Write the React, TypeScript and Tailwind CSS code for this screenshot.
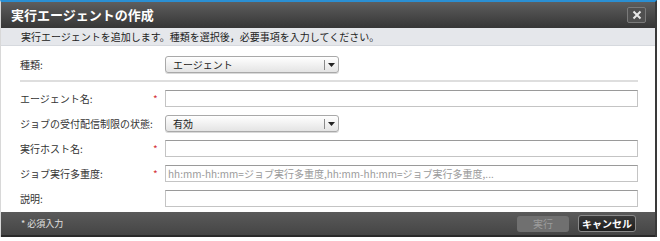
import React from "react";

const font = { fontFamily: '"Noto Sans CJK JP", "Liberation Sans", sans-serif' };

function Select({ value }: { value: string }) {
  return (
    <div className="flex h-[17px] w-[174px] items-center rounded-[3px] border border-[#a9a9a9] bg-gradient-to-b from-[#ffffff] to-[#e4e4e4] shadow-[0_1px_0_rgba(0,0,0,0.15)]">
      <span className="flex-1 pl-[7px] text-[10px] leading-none text-[#222]">{value}</span>
      <span className="h-[10px] w-px bg-[#8a8a8a]" />
      <span className="flex w-[13px] items-center justify-center">
        <svg width="7" height="4" viewBox="0 0 7 4">
          <path d="M0 0h7L3.5 4z" fill="#222" />
        </svg>
      </span>
    </div>
  );
}

function Input({ placeholder }: { placeholder?: string }) {
  return (
    <div className="flex h-[17px] flex-1 items-center border border-[#c4c4c4] border-t-[#9a9a9a] bg-white pl-[2px] text-[10px] leading-none text-[#9a9a9a]">
      {placeholder}
    </div>
  );
}

function Row({ label, required, children }: { label: string; required?: boolean; children: React.ReactNode }) {
  return (
    <div className="flex h-[17px] items-center">
      <span className="w-[133px] text-[10px] leading-none text-[#333]">{label}</span>
      <span className="w-[12px] text-[10px] leading-none text-[#d4333a]">{required ? "*" : ""}</span>
      {children}
    </div>
  );
}

export default function App() {
  return (
    <div className="h-[241px] w-[660px] bg-white" style={font}>
      <div className="flex h-[237px] w-[657px] flex-col border-l border-r-2 border-l-[#d8d8d8] border-r-[#3a3a3a] border-t-2 border-t-[#2a8fd3]">
        <div className="flex h-[26px] items-center justify-between bg-gradient-to-b from-[#5e5e5e] to-[#363636] pl-[10px] pr-[9px]">
          <span className="text-[13px] font-bold text-white">実行エージェントの作成</span>
          <span className="flex h-[16px] w-[19px] items-center justify-center rounded-[2px] border border-[#7a7a7a] bg-[#505050]">
            <svg width="10" height="10" viewBox="0 0 10 10">
              <path d="M1.5 1.5l7 7M8.5 1.5l-7 7" stroke="#e8e8e8" strokeWidth="2" />
            </svg>
          </span>
        </div>
        <div className="flex h-[18px] items-center border-b border-[#d6d9de] bg-[#e5e7eb] pl-[20px] text-[10px] text-[#222]">
          実行エージェントを追加します。種類を選択後，必要事項を入力してください。
        </div>
        <div className="flex flex-1 flex-col pl-[19px] pr-[17px] pt-[10px]">
          <Row label="種類:">
            <Select value="エージェント" />
          </Row>
          <div className="mt-[7px] mb-[8px] h-[2px] bg-[#dedede]" />
          <div className="flex flex-col gap-[8px]">
            <Row label="エージェント名:" required>
              <Input />
            </Row>
            <Row label="ジョブの受付配信制限の状態:">
              <Select value="有効" />
            </Row>
            <Row label="実行ホスト名:" required>
              <Input />
            </Row>
            <Row label="ジョブ実行多重度:" required>
              <Input placeholder="hh:mm-hh:mm=ジョブ実行多重度,hh:mm-hh:mm=ジョブ実行多重度,..." />
            </Row>
            <Row label="説明:">
              <Input />
            </Row>
          </div>
        </div>
        <div className="flex h-[25px] items-center justify-between border-b-2 border-[#2a2a2a] bg-gradient-to-b from-[#5a5a5a] to-[#454545] pl-[20px] pr-[19px]">
          <span className="text-[9px] text-[#e0e0e0]">* 必須入力</span>
          <div className="flex items-center gap-[9px]">
            <span className="flex h-[16px] w-[52px] items-center justify-center rounded-[3px] bg-[#707070] text-[10px] text-[#9c9c9c]">
              実行
            </span>
            <span className="flex h-[17px] w-[58px] items-center justify-center rounded-[3px] border border-[#8a8a8a] bg-gradient-to-b from-[#3a3a3a] to-[#1e1e1e] text-[10px] font-bold text-white">
              キャンセル
            </span>
          </div>
        </div>
      </div>
    </div>
  );
}
